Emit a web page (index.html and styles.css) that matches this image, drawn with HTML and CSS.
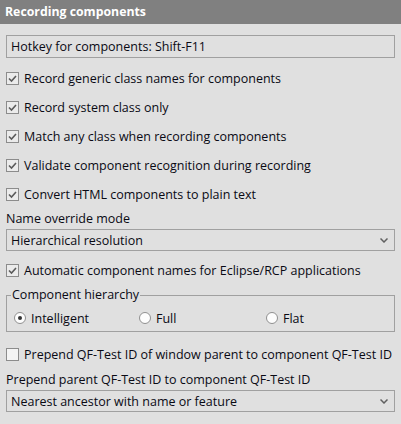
FILE: index.html
```html
<!DOCTYPE html>
<html>
<head>
<meta charset="utf-8">
<link rel="stylesheet" href="styles.css">
</head>
<body>
<div class="header">Recording components</div>
<div class="content">
  <div class="field">Hotkey for components: Shift-F11</div>
  <div class="checks">
    <label class="row"><span class="cb on"><svg viewBox="0 0 11 11"><path d="M2 5.5 L4.5 8 L9 3"/></svg></span>Record generic class names for components</label>
    <label class="row"><span class="cb on"><svg viewBox="0 0 11 11"><path d="M2 5.5 L4.5 8 L9 3"/></svg></span>Record system class only</label>
    <label class="row"><span class="cb on"><svg viewBox="0 0 11 11"><path d="M2 5.5 L4.5 8 L9 3"/></svg></span>Match any class when recording components</label>
    <label class="row"><span class="cb on"><svg viewBox="0 0 11 11"><path d="M2 5.5 L4.5 8 L9 3"/></svg></span>Validate component recognition during recording</label>
    <label class="row"><span class="cb on"><svg viewBox="0 0 11 11"><path d="M2 5.5 L4.5 8 L9 3"/></svg></span>Convert HTML components to plain text</label>
  </div>
  <div class="label lbl1">Name override mode</div>
  <div class="select"><span>Hierarchical resolution</span><svg class="chev" viewBox="0 0 8 5"><path d="M0.5 0.5 L4 4 L7.5 0.5"/></svg></div>
  <label class="row auto"><span class="cb on"><svg viewBox="0 0 11 11"><path d="M2 5.5 L4.5 8 L9 3"/></svg></span>Automatic component names for Eclipse/RCP applications</label>
  <fieldset class="group">
    <legend>Component hierarchy</legend>
    <div class="radios">
      <label class="radio"><span class="rb sel"></span>Intelligent</label>
      <label class="radio"><span class="rb"></span>Full</label>
      <label class="radio"><span class="rb"></span>Flat</label>
    </div>
  </fieldset>
  <label class="row prepend"><span class="cb off"></span>Prepend QF-Test ID of window parent to component QF-Test ID</label>
  <div class="label lbl2">Prepend parent QF-Test ID to component QF-Test ID</div>
  <div class="select"><span>Nearest ancestor with name or feature</span><svg class="chev" viewBox="0 0 8 5"><path d="M0.5 0.5 L4 4 L7.5 0.5"/></svg></div>
</div>
</body>
</html>
```
FILE: styles.css
```css
* { box-sizing: border-box; }
html, body { margin: 0; padding: 0; }
body {
  width: 401px;
  height: 424px;
  background: #e0e0e0;
  font-family: "Open Sans", "Noto Sans", sans-serif;
  font-size: 12.5px;
  color: #0a0a14;
  overflow: hidden;
}
.header {
  height: 24px;
  line-height: 24px;
  background: #808080;
  color: #fff;
  font-weight: bold;
  font-size: 12.3px;
  padding-left: 5px;
}
.content {
  padding: 0 6px 0 6px;
  display: flex;
  flex-direction: column;
}
.field {
  margin-top: 11px;
  height: 23px;
  border: 1px solid #a0a0a0;
  padding-left: 4px;
  line-height: 21px;
}
.checks {
  margin-top: 6px;
  display: flex;
  flex-direction: column;
}
.row {
  height: 29px;
  display: flex;
  align-items: center;
  white-space: nowrap;
}
.cb {
  width: 13px;
  height: 13px;
  border: 1px solid #8c8c8c;
  background: #ebebeb;
  margin-right: 5px;
  flex: none;
  display: flex;
  align-items: center;
  justify-content: center;
}
.cb.off { background: #f4f4f4; }
.cb svg { width: 11px; height: 11px; }
.cb svg path { fill: none; stroke: #5a5a5a; stroke-width: 1.6; }
.label {
  height: 16px;
  line-height: 16px;
  white-space: nowrap;
}
.lbl1 { margin-top: 2px; }
.lbl2 { margin-top: 4px; }
.select {
  margin-top: 2px;
  height: 22px;
  border: 1px solid #a0a0a0;
  padding: 0 6px 0 4px;
  display: flex;
  align-items: center;
  justify-content: space-between;
}
.chev { width: 8px; height: 5px; }
.chev path { fill: none; stroke: #606060; stroke-width: 1.5; }
.auto { margin-top: 5px; }
.group {
  margin: 2px 0 0 0;
  border: 1px solid #a0a0a0;
  padding: 6px 0 4px 7px;
  min-width: 0;
}
.group legend {
  padding: 0 1px;
  margin-left: -3px;
  line-height: 16px;
}
.radios {
  display: grid;
  grid-template-columns: 125px 127px 1fr;
}
.radio {
  display: flex;
  align-items: center;
  height: 18px;
}
.rb {
  width: 12px;
  height: 12px;
  border-radius: 50%;
  border: 1px solid #909090;
  background: #fdfdfd;
  margin-right: 5px;
  flex: none;
  display: flex;
  align-items: center;
  justify-content: center;
}
.rb.sel::after {
  content: "";
  width: 4px;
  height: 4px;
  border-radius: 50%;
  background: #333;
}
.prepend { margin-top: 8px; height: 28px; }
```
